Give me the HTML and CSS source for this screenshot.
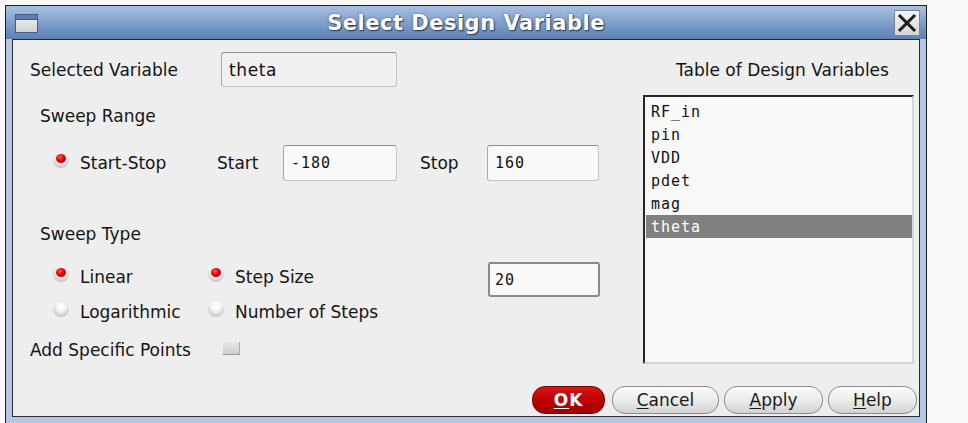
FILE: index.html
```html
<!DOCTYPE html>
<html>
<head>
<meta charset="utf-8">
<link rel="stylesheet" href="styles.css">
</head>
<body>
<div class="window">
  <div class="titlebar">
    <div class="win-icon"><div class="win-icon-bar"></div></div>
    <div class="title">Select Design Variable</div>
    <div class="close">
      <svg width="24" height="24" viewBox="0 0 24 24"><path d="M5 5 L19 19 M19 5 L5 19" stroke="#1e1e1e" stroke-width="3" stroke-linecap="square" fill="none"/></svg>
    </div>
  </div>
  <div class="client">
    <div class="top">
      <div class="form">
        <div class="row row-sel">
          <div class="lbl w-sel">Selected Variable</div>
          <div class="field f-sel sans">theta</div>
        </div>
        <div class="head head-range">Sweep Range</div>
        <div class="row row-start">
          <div class="opt w-ss"><span class="radio on"></span><span>Start-Stop</span></div>
          <div class="lbl w-start">Start</div>
          <div class="field f-start">-180</div>
          <div class="lbl w-stop">Stop</div>
          <div class="field f-stop">160</div>
        </div>
        <div class="head head-type">Sweep Type</div>
        <div class="row row-lin">
          <div class="opt w-c1"><span class="radio on"></span><span>Linear</span></div>
          <div class="opt w-c2"><span class="radio on"></span><span>Step Size</span></div>
          <div class="field f-step">20</div>
        </div>
        <div class="row row-log">
          <div class="opt w-c1"><span class="radio"></span><span>Logarithmic</span></div>
          <div class="opt w-c2"><span class="radio"></span><span>Number of Steps</span></div>
        </div>
        <div class="row row-add">
          <div class="lbl w-add">Add Specific Points</div>
          <span class="check"></span>
        </div>
      </div>
      <div class="side">
        <div class="side-title">Table of Design Variables</div>
        <div class="list">
          <div class="item">RF_in</div>
          <div class="item">pin</div>
          <div class="item">VDD</div>
          <div class="item">pdet</div>
          <div class="item">mag</div>
          <div class="item selected">theta</div>
        </div>
      </div>
    </div>
    <div class="buttons">
      <div class="btn ok"><u>O</u>K</div>
      <div class="btn b-cancel"><u>C</u>ancel</div>
      <div class="btn b-apply"><u>A</u>pply</div>
      <div class="btn b-help"><u>H</u>elp</div>
    </div>
  </div>
</div>
</body>
</html>
```
FILE: styles.css
```css
html, body {
  margin: 0;
  padding: 0;
}
body {
  background: #f8f8f8;
  width: 968px;
  height: 423px;
  overflow: hidden;
  padding: 5px 0 0 5px;
  box-sizing: border-box;
  font-family: "DejaVu Sans", sans-serif;
  font-size: 17px;
  color: #141414;
}
.window {
  width: 922px;
  box-sizing: border-box;
  border: 1px solid #1c1c1c;
  background: #b4c8e4;
  padding-bottom: 6px;
}
.titlebar {
  height: 33px;
  display: flex;
  align-items: center;
  background: linear-gradient(#a9c1e2, #84a3cf 45%, #5b80b4);
  padding: 0 6px 0 9px;
}
.win-icon {
  width: 21px;
  height: 17px;
  border: 1px solid #4a5a78;
  background: linear-gradient(#f2f2f2, #d2d2d2);
  margin-top: 2px;
  box-sizing: content-box;
}
.win-icon-bar {
  height: 4px;
  background: #5c7fb3;
  border-bottom: 1px solid #3e5a86;
}
.title {
  flex: 1;
  text-align: center;
  color: #ffffff;
  font-weight: bold;
  font-size: 21px;
  letter-spacing: 0.5px;
  text-shadow: 1px 1px 1px #2a3a55, 0 0 2px #3a4d70;
}
.close {
  width: 24px;
  height: 24px;
  border: 1px solid #7d8594;
  background: linear-gradient(#f4f4f4, #d6d6d6);
  display: flex;
  align-items: center;
  justify-content: center;
}
.client {
  margin: 0 6px;
  height: 378px;
  box-sizing: border-box;
  border: 1px solid #2b2b2b;
  background: #eeeeee;
  display: flex;
  flex-direction: column;
}
.top {
  display: flex;
}
.form {
  width: 630px;
  display: flex;
  flex-direction: column;
}
.row {
  display: flex;
  align-items: center;
}
.lbl, .opt, .head {
  white-space: nowrap;
  line-height: 20px;
}
.opt {
  display: flex;
  align-items: center;
  gap: 11px;
}
.row-sel {
  margin-top: 12px;
  height: 35px;
  padding-left: 17px;
}
.w-sel { width: 191px; }
.head {
  padding-left: 27px;
  height: 20px;
}
.head-range { margin-top: 19px; }
.row-start {
  margin-top: 19px;
  height: 36px;
  padding-left: 40px;
}
.w-ss { width: 164px; }
.w-start { width: 66px; }
.w-stop { width: 67px; margin-left: 23px; }
.head-type { margin-top: 43px; }
.row-lin {
  margin-top: 18px;
  height: 30px;
  padding-left: 40px;
}
.row-log {
  margin-top: 5px;
  height: 30px;
  padding-left: 40px;
}
.w-c1 { width: 155px; }
.w-c2 { width: 280px; }
.row-add {
  margin-top: 8px;
  height: 30px;
  padding-left: 17px;
}
.w-add { width: 193px; }

.field {
  box-sizing: border-box;
  background: #f9f9f9;
  border: 1px solid #c4c4c4;
  border-top-color: #8e8e8e;
  border-left-color: #a8a8a8;
  border-radius: 3px;
  display: flex;
  align-items: center;
  padding-left: 7px;
  font-family: "DejaVu Sans Mono", monospace;
  font-size: 15px;
  letter-spacing: 1px;
  color: #111;
}
.field.sans {
  font-family: "DejaVu Sans", sans-serif;
  font-size: 17px;
  letter-spacing: 0.6px;
}
.f-sel { width: 176px; height: 35px; background: #f0f0f0; }
.f-start { width: 114px; height: 36px; }
.f-stop { width: 112px; height: 36px; }
.f-step {
  width: 112px;
  height: 35px;
  align-self: flex-start;
  border: 2px solid #8a8a8a;
  padding-left: 5px;
}

.radio {
  width: 16px;
  height: 15px;
  border-radius: 50%;
  flex: none;
  margin-top: -5px;
  background: radial-gradient(circle at 50% 30%, #ffffff 0, #f4f4f4 35%, #cfcfcf 70%, #9c9c9c 100%);
  position: relative;
}
.radio.on::after {
  content: "";
  position: absolute;
  left: 3px;
  top: 1px;
  width: 10px;
  height: 9px;
  border-radius: 50%;
  background: radial-gradient(circle at 40% 35%, #ff5a5a 0, #e00000 45%, #a00000 100%);
}
.check {
  width: 16px;
  height: 12px;
  margin-top: -3px;
  background: linear-gradient(#e6e6e6, #cfcfcf);
  border-bottom: 1px solid #9a9a9a;
  border-right: 1px solid #b0b0b0;
}

.side {
  width: 271px;
  display: flex;
  flex-direction: column;
}
.side-title {
  margin-top: 20px;
  line-height: 20px;
  padding-left: 33px;
  white-space: nowrap;
}
.list {
  margin-top: 15px;
  height: 269px;
  box-sizing: border-box;
  border: 2px solid #d4d4d4;
  border-top-color: #262626;
  border-left-color: #262626;
  background: #f8f8f8;
  padding: 3px 0 0 1px;
}
.item {
  height: 23px;
  box-sizing: border-box;
  padding: 2px 0 0 5px;
  line-height: 21px;
  font-family: "DejaVu Sans Mono", monospace;
  font-size: 15px;
  letter-spacing: 1px;
  color: #111;
}
.item.selected {
  background: #808080;
  color: #ffffff;
}

.buttons {
  margin-top: 21px;
  display: flex;
  justify-content: flex-end;
  padding-right: 2px;
}
.btn {
  height: 28px;
  box-sizing: border-box;
  border: 1px solid #8c8c8c;
  border-radius: 13px;
  background: linear-gradient(#fbfbfb, #ececec 50%, #d2d2d2);
  display: flex;
  align-items: center;
  justify-content: center;
  color: #1a1a1a;
  margin-left: 5px;
}
.btn u {
  text-underline-offset: 2px;
}
.ok {
  width: 73px;
  margin-left: 0;
  background: linear-gradient(#d81818, #c00000 50%, #a00000);
  border-color: #7a0000;
  color: #ffffff;
  font-weight: bold;
  letter-spacing: 1px;
}
.b-cancel { width: 107px; margin-left: 7px; }
.b-apply { width: 99px; }
.b-help { width: 89px; }
```
